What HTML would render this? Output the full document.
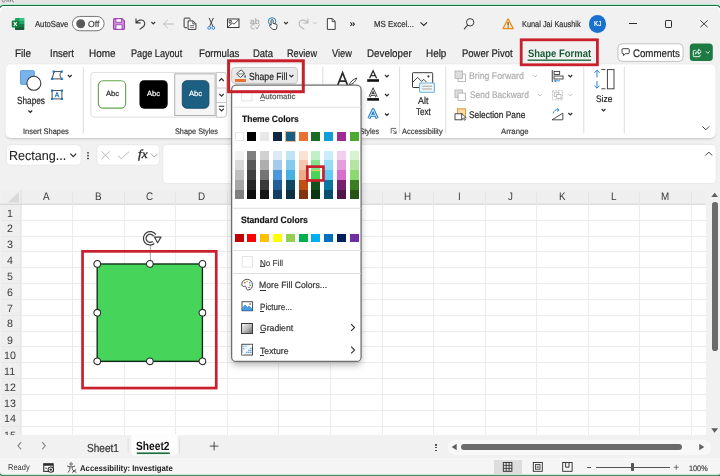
<!DOCTYPE html><html><head><meta charset="utf-8"><title>Excel</title><style>

html,body{margin:0;padding:0}
body{width:720px;height:476px;overflow:hidden;position:relative;background:#e6e6e6;font-family:"Liberation Sans",sans-serif}
#w{position:absolute;left:0;top:0;width:720px;height:476px;overflow:hidden;will-change:transform}
.a{position:absolute}
.t{position:absolute;white-space:nowrap;line-height:1;transform-origin:0 0;-webkit-text-stroke:0.2px currentColor;transform:rotate(0.05deg)}
svg{overflow:visible}

</style></head><body><div id="w">
<div class="a" style="left:0px;top:0px;width:720px;height:5px;background:#e6e6e6;"></div>
<svg class="a" style="left:0px;top:0px;" width="18" height="3"><path d="M2.2 0 V0.6 a1.4 1.4 0 0 0 2.8 0 V0 M7 0 V1.8 M8.8 0 V1.8 M10.6 0 V1.8 M12.4 0 V0.8 a1 1 0 0 0 1.6 0.8" fill="none" stroke="#777" stroke-width="0.9"/></svg>
<svg class="a" style="left:0px;top:0px;" width="720" height="476"><path d="M-1.2 12 V10.5 a5 5 0 0 1 5 -5 H716.2 a5 5 0 0 1 5 5 V12" fill="none" stroke="#b5edd0" stroke-width="2.8"/> <path d="M-1.2 480 V10.5 a5 5 0 0 1 5 -5 H716.2 a5 5 0 0 1 5 5 V480 Z" fill="#f1f1f1" stroke="#1e6e42" stroke-width="1.2"/> <path d="M0 12 V11 a4.2 4.2 0 0 1 4.2 -4.2 H715.8 a4.2 4.2 0 0 1 4.2 4.2 V12" fill="none" stroke="#ffffff" stroke-width="1.1"/></svg>
<svg class="a" style="left:11px;top:18px;" width="14" height="12"><g transform="translate(0.75 0)"><rect x="3.2" y="0" width="9.3" height="12" rx="1" fill="#21a366"/> <rect x="7.8" y="0" width="4.7" height="3" fill="#33c481"/> <rect x="3.2" y="3" width="4.6" height="3" fill="#107c41"/> <rect x="7.8" y="3" width="4.7" height="3" fill="#21a366"/> <rect x="3.2" y="6" width="4.6" height="3" fill="#0e6a37"/> <rect x="7.8" y="6" width="4.7" height="3" fill="#107c41"/> <rect x="3.2" y="9" width="9.3" height="3" rx="1" fill="#185c37"/> <rect x="0" y="2.6" width="7" height="7" rx="1" fill="#107c41"/> <path d="M2 4.2 L5 8 M5 4.2 L2 8" stroke="#fff" stroke-width="1.1" fill="none"/></g></svg>
<span class="t" style="left:34.65px;top:19.76px;font-size:8.76px;color:#333;transform:scaleX(0.8782) rotate(0.05deg);">AutoSave</span>
<svg class="a" style="left:72px;top:16px;" width="33" height="16"><rect x="0.450" y="0.450" width="31.700" height="14.300" rx="7.2" fill="#fff" stroke="#6a6a6a" stroke-width="0.9"/></svg>
<svg class="a" style="left:76px;top:19px;" width="10" height="10"><circle cx="4.7" cy="4.7" r="4.5" fill="#5c5c5c"/></svg>
<span class="t" style="left:88.33px;top:19.76px;font-size:8.76px;color:#444;transform:scaleX(0.9822) rotate(0.05deg);">Off</span>
<svg class="a" style="left:113px;top:18px;" width="12" height="12"><path d="M0.6 1.6 a1 1 0 0 1 1-1 H9 L11.4 3 V10.4 a1 1 0 0 1 -1 1 H1.6 a1 1 0 0 1 -1 -1 Z" fill="#d58de0" stroke="#9a3fae" stroke-width="1.1"/> <rect x="3" y="0.8" width="5.6" height="3.4" fill="#fff" stroke="#9a3fae" stroke-width="0.8"/> <rect x="3" y="6.8" width="6" height="4.4" fill="#fff" stroke="#9a3fae" stroke-width="0.8"/></svg>
<svg class="a" style="left:135px;top:17px;" width="11" height="13"><g transform="translate(0 0.5)"><path d="M1 1.2 V5.4 H5.2 M1.2 5.2 C3 2.6 6.4 1.6 8.6 3.4 C10.6 5.2 10 8 7.6 9.8 L5 11.6" fill="none" stroke="#3b3b3b" stroke-width="1.1" stroke-linecap="round" stroke-linejoin="round"/></g></svg>
<svg class="a" style="left:151px;top:21px;" width="5" height="4"><g transform="translate(0 0.5)"><path d="M0.4 0.5 L2.25 2.5 L4.1 0.5" fill="none" stroke="#3b3b3b" stroke-width="1.15"/></g></svg>
<svg class="a" style="left:163px;top:19px;" width="11" height="10"><g transform="translate(0 0.5)"><path d="M0.6 4.5 H10.6 M4.6 0.6 L0.6 4.5 L4.6 8.4" fill="none" stroke="#bdbdbd" stroke-width="1" stroke-linecap="round" stroke-linejoin="round"/></g></svg>
<svg class="a" style="left:183px;top:17px;" width="14" height="13"><g transform="translate(0.5 0.5)"><path d="M0.6 1.4 a0.8 0.8 0 0 1 .8 -.8 H5.8 a0.8 0.8 0 0 1 .8 .8 V2.4 M0.6 1.4 V9.4 a0.8 0.8 0 0 0 .8 .8 H3.6" fill="none" stroke="#3b3b3b" stroke-width="1"/> <path d="M4.6 3.4 H9.6 L12.4 6.2 V11.9 H4.6 Z" fill="#fff" stroke="#3b3b3b" stroke-width="1" stroke-linejoin="round"/> <path d="M9.4 3.6 V6.4 H12.2" fill="none" stroke="#3b3b3b" stroke-width="0.9"/> <path d="M6.4 8 H10.6 M6.4 9.8 H10.6" stroke="#3b3b3b" stroke-width="0.7"/></g></svg>
<svg class="a" style="left:207px;top:17px;" width="8" height="13"><g transform="translate(0.5 0.5)"><path d="M1.6 0.4 L5.4 9 M5.9 0.4 L2.1 9" stroke="#3b3b3b" stroke-width="0.95" fill="none"/> <circle cx="1.7" cy="10.4" r="1.4" fill="#fff" stroke="#1e7bd0" stroke-width="0.95"/> <circle cx="5.8" cy="10.4" r="1.4" fill="#fff" stroke="#1e7bd0" stroke-width="0.95"/></g></svg>
<svg class="a" style="left:227px;top:18px;" width="13" height="10"><g transform="translate(0 0.5)"><rect x="0.5" y="0.5" width="11.5" height="8.5" fill="#fff" stroke="#3b3b3b" stroke-width="1"/> <path d="M0.6 8.6 L5.4 4.6 L7 5.6 L12 0.8" fill="none" stroke="#3b3b3b" stroke-width="0.9"/> <path d="M2 2 h2.4 v1.8 h-2.4 z M2 4.6 h2" fill="none" stroke="#3b3b3b" stroke-width="0.8"/></g></svg>
<span class="t" style="left:250.28px;top:17.73px;font-size:7.88px;color:#a9a9a9;transform:scaleX(1.0895) rotate(0.05deg);">ab</span>
<svg class="a" style="left:250px;top:23px;" width="10" height="7"><g transform="translate(0 0.6)"><path d="M4.4 1.2 C2.6 0.6 0.8 1.6 0.8 3.2 C0.8 4.8 2.6 5.8 4.4 5.2 M5.4 3.2 L7 5.4 L9.6 0.8" fill="none" stroke="#a9a9a9" stroke-width="0.95"/></g></svg>
<svg class="a" style="left:267px;top:17px;" width="11" height="13"><g transform="translate(0.5 0)"><circle cx="4.6" cy="4.4" r="3.7" fill="none" stroke="#1e7bd0" stroke-width="1"/> <path d="M3.6 8.2 V3.6 a1 1 0 0 1 2 0 V6.4 L8.6 7.2 a1.2 1.2 0 0 1 1 1.4 L9.2 11 a1.6 1.6 0 0 1 -1.6 1.5 H5.4 L2.2 9.4 a0.9 0.9 0 0 1 1.4 -1.2 Z" fill="#fff" stroke="#3b3b3b" stroke-width="0.95" stroke-linejoin="round"/></g></svg>
<svg class="a" style="left:283px;top:21px;" width="6" height="4"><g transform="translate(0.75 0.5)"><path d="M0.4 0.5 L2.25 2.5 L4.1 0.5" fill="none" stroke="#3b3b3b" stroke-width="1.15"/></g></svg>
<svg class="a" style="left:297px;top:17px;" width="12" height="13"><g transform="translate(0.5 0.5)"><path d="M10.4 1.2 V5.4 H6.2 M10.2 5.2 C8.4 2.6 5 1.6 2.8 3.4 C0.8 5.2 1.4 8 3.8 9.8 L6.4 11.6" fill="none" stroke="#b5b5b5" stroke-width="1.05" stroke-linecap="round" stroke-linejoin="round"/></g></svg>
<svg class="a" style="left:312px;top:21px;" width="5" height="4"><g transform="translate(0.5 0.5)"><path d="M0.4 0.5 L2.25 2.5 L4.1 0.5" fill="none" stroke="#c4c4c4" stroke-width="0.9"/></g></svg>
<svg class="a" style="left:326px;top:18px;" width="10" height="12"><g transform="translate(0.75 0)"><path d="M0.6 0.6 H5.6 L8.4 3.4 V11.4 H0.6 Z" fill="#fff" stroke="#3b3b3b" stroke-width="1" stroke-linejoin="round"/><path d="M5.4 0.8 V3.6 H8.2" fill="none" stroke="#3b3b3b" stroke-width="0.9"/></g></svg>
<svg class="a" style="left:350px;top:22px;" width="5" height="5"><path d="M0.4 0.4 L2 2.2 L0.4 4 M2.8 0.4 L4.4 2.2 L2.8 4" fill="none" stroke="#2b2b2b" stroke-width="1.05"/></svg>
<span class="t" style="left:373.66px;top:19.76px;font-size:8.76px;color:#333;transform:scaleX(0.9011) rotate(0.05deg);">MS Excel...</span>
<svg class="a" style="left:420px;top:21px;" width="8" height="6"><g transform="translate(0 0.8)"><path d="M0.5 0.5 L3.75 3.7 L7 0.5" fill="none" stroke="#2b2b2b" stroke-width="1.15"/></g></svg>
<svg class="a" style="left:463px;top:18px;" width="12" height="12"><g transform="translate(0.75 0)"><circle cx="6.4" cy="4.3" r="3.7" fill="none" stroke="#3b3b3b" stroke-width="1"/><path d="M3.8 7.2 L0.6 10.9" stroke="#3b3b3b" stroke-width="1.1" stroke-linecap="round"/></g></svg>
<svg class="a" style="left:502px;top:18px;" width="12" height="12"><g transform="translate(0.5 0)"><path d="M5.6 0.8 L10.7 10.6 H0.55 Z" fill="#fde9c6" stroke="#e8891a" stroke-width="1.2" stroke-linejoin="round"/><path d="M5.6 4 V7.4" stroke="#5a3a00" stroke-width="1.1"/><circle cx="5.6" cy="9" r="0.65" fill="#5a3a00"/></g></svg>
<span class="t" style="left:521.98px;top:19.76px;font-size:8.76px;color:#333;transform:scaleX(0.8427) rotate(0.05deg);">Kunal Jai Kaushik</span>
<div class="a" style="left:588.75px;top:15px;width:17.5px;height:17.5px;background:#1870cf;border-radius:9px;"></div>
<span class="t" style="left:594.23px;top:21.21px;font-size:7.15px;color:#fff;transform:scaleX(0.8796) rotate(0.05deg);">KJ</span>
<div class="a" style="left:628.75px;top:23.4px;width:8.4px;height:0.9px;background:#2b2b2b;"></div>
<div class="a" style="left:664.5px;top:20px;width:7.6px;height:7.6px;border:1px solid #2b2b2b;box-sizing:border-box;border-radius:1.2px;"></div>
<svg class="a" style="left:700px;top:20px;" width="8" height="8"><path d="M0.3 0.3 L7.7 7.3 M7.7 0.3 L0.3 7.3" stroke="#2b2b2b" stroke-width="0.9"/></svg>
<span class="t" style="left:15.03px;top:47.75px;font-size:10.95px;color:#242424;transform:scaleX(0.9134) rotate(0.05deg);">File</span>
<span class="t" style="left:49.84px;top:47.75px;font-size:10.95px;color:#242424;transform:scaleX(0.8754) rotate(0.05deg);">Insert</span>
<span class="t" style="left:89.14px;top:47.75px;font-size:10.95px;color:#242424;transform:scaleX(0.9111) rotate(0.05deg);">Home</span>
<span class="t" style="left:131.32px;top:47.75px;font-size:10.95px;color:#242424;transform:scaleX(0.834) rotate(0.05deg);">Page Layout</span>
<span class="t" style="left:199.14px;top:47.75px;font-size:10.95px;color:#242424;transform:scaleX(0.8856) rotate(0.05deg);">Formulas</span>
<span class="t" style="left:253.24px;top:47.75px;font-size:10.95px;color:#242424;transform:scaleX(0.8668) rotate(0.05deg);">Data</span>
<span class="t" style="left:287.25px;top:47.75px;font-size:10.95px;color:#242424;transform:scaleX(0.8363) rotate(0.05deg);">Review</span>
<span class="t" style="left:332.27px;top:47.75px;font-size:10.95px;color:#242424;transform:scaleX(0.8455) rotate(0.05deg);">View</span>
<span class="t" style="left:367.17px;top:47.75px;font-size:10.95px;color:#242424;transform:scaleX(0.8963) rotate(0.05deg);">Developer</span>
<span class="t" style="left:426.16px;top:47.75px;font-size:10.95px;color:#242424;transform:scaleX(0.9043) rotate(0.05deg);">Help</span>
<span class="t" style="left:462.27px;top:47.75px;font-size:10.95px;color:#242424;transform:scaleX(0.8659) rotate(0.05deg);">Power Pivot</span>
<span class="t" style="left:527.65px;top:47.86px;font-size:10.8px;color:#185c37;font-weight:bold;transform:scaleX(0.8758) rotate(0.05deg);-webkit-text-stroke:0;">Shape Format</span>
<svg class="a" style="left:527px;top:59px;" width="64" height="2"><g transform="translate(0.6 0.5)"><rect x="0" y="0" width="63.400" height="1.400" rx="0" fill="#1e6e42"/></g></svg>
<svg class="a" style="left:617px;top:43px;" width="67" height="19"><g transform="translate(0.5 0.4)"><rect x="0.450" y="0.450" width="65.100" height="17.500" rx="4" fill="#fff" stroke="#bcbcbc" stroke-width="0.9"/></g></svg>
<svg class="a" style="left:621px;top:48px;" width="9" height="9"><g transform="translate(0.5 0.2)"><path d="M1.4 0.5 H6.8 a0.9 0.9 0 0 1 .9 .9 V4.6 a0.9 0.9 0 0 1 -.9 .9 H4 L2 7.4 V5.5 H1.4 a0.9 0.9 0 0 1 -.9 -.9 V1.4 a0.9 0.9 0 0 1 .9 -.9 Z" fill="none" stroke="#2b2b2b" stroke-width="0.9" stroke-linejoin="round"/></g></svg>
<span class="t" style="left:632.84px;top:47.75px;font-size:10.95px;color:#242424;transform:scaleX(0.8854) rotate(0.05deg);">Comments</span>
<svg class="a" style="left:689px;top:43px;" width="24" height="19"><g transform="translate(0.8 0.6)"><rect x="0" y="0" width="23.000" height="17.500" rx="3.6" fill="#1e7a43"/></g></svg>
<svg class="a" style="left:692px;top:47px;" width="10" height="11"><g transform="translate(0.6 0.8)"><path d="M3 2.6 H1.6 a0.9 0.9 0 0 0 -.9 .9 V8 a0.9 0.9 0 0 0 .9 .9 H6.6 a0.9 0.9 0 0 0 .9 -.9 V7" fill="none" stroke="#fff" stroke-width="0.95"/><path d="M2.8 6.4 C3 4.2 4.4 3.2 6 3.2 V1.4 L8.6 3.9 L6 6.4 V4.6 C4.6 4.6 3.6 5.2 2.8 6.4 Z" fill="none" stroke="#fff" stroke-width="0.9" stroke-linejoin="round"/></g></svg>
<svg class="a" style="left:705px;top:51px;" width="6" height="3"><g transform="translate(0.6 0)"><path d="M0.4 0.4 L2.2 2.3 L4 0.4" fill="none" stroke="#fff" stroke-width="0.9"/></g></svg>
<div class="a" style="left:6px;top:65px;width:709px;height:72.5px;background:#fff;border-radius:5px;box-shadow:0 0.8px 2.4px rgba(0,0,0,0.2);"></div>
<svg class="a" style="left:5px;top:64px;" width="711" height="74"><g transform="translate(0.5 0.2)"><rect x="0" y="0" width="710.200" height="73.600" rx="5" fill="#fff"/></g></svg>
<svg class="a" style="left:82px;top:67px;" width="2" height="67"><g transform="translate(0.8 0)"><rect x="0" y="0" width="1.000" height="66.500" rx="0" fill="#dcdcdc"/></g></svg>
<svg class="a" style="left:322px;top:67px;" width="2" height="67"><g transform="translate(0.3 0)"><rect x="0" y="0" width="1.000" height="66.500" rx="0" fill="#dcdcdc"/></g></svg>
<svg class="a" style="left:399px;top:67px;" width="2" height="67"><g transform="translate(0.1 0)"><rect x="0" y="0" width="1.000" height="66.500" rx="0" fill="#dcdcdc"/></g></svg>
<svg class="a" style="left:445px;top:67px;" width="2" height="67"><g transform="translate(0.3 0)"><rect x="0" y="0" width="1.000" height="66.500" rx="0" fill="#dcdcdc"/></g></svg>
<svg class="a" style="left:583px;top:67px;" width="2" height="67"><g transform="translate(0.3 0)"><rect x="0" y="0" width="1.000" height="66.500" rx="0" fill="#dcdcdc"/></g></svg>
<svg class="a" style="left:623px;top:67px;" width="2" height="67"><g transform="translate(0.8 0)"><rect x="0" y="0" width="1.000" height="66.500" rx="0" fill="#dcdcdc"/></g></svg>
<svg class="a" style="left:20px;top:70px;" width="22" height="22"><g transform="translate(0 0.2)"><rect x="0.5" y="0.5" width="13.8" height="13.6" rx="0.8" fill="#7ab2ea" stroke="#5a9de0" stroke-width="1"/><circle cx="13.85" cy="13.1" r="7" fill="#fff" stroke="#3b3b3b" stroke-width="1.1"/></g></svg>
<span class="t" style="left:17.17px;top:96.37px;font-size:10.22px;color:#242424;transform:scaleX(0.8064) rotate(0.05deg);">Shapes</span>
<svg class="a" style="left:28px;top:110px;" width="5" height="4"><path d="M0.4 0.5 L2.3 2.5 L4.2 0.5" fill="none" stroke="#2b2b2b" stroke-width="1.15"/></svg>
<svg class="a" style="left:51px;top:70px;" width="12" height="10"><g transform="translate(0 0.5)"><path d="M3 1.1 H10.7 C8.4 3.4 8.4 5.8 10.9 8.4 H1.1 Z" fill="none" stroke="#3b3b3b" stroke-width="0.95"/> <rect x="1.6" y="0" width="2.2" height="2.2" fill="#1e7bd0"/><rect x="9.6" y="0" width="2.2" height="2.2" fill="#1e7bd0"/><rect x="0" y="7.3" width="2.2" height="2.2" fill="#1e7bd0"/><rect x="9.8" y="7.3" width="2.2" height="2.2" fill="#1e7bd0"/></g></svg>
<svg class="a" style="left:67px;top:74px;" width="6" height="4"><g transform="translate(0.5 0.5)"><path d="M0.4 0.5 L2.3 2.5 L4.2 0.5" fill="none" stroke="#2b2b2b" stroke-width="1.15"/></g></svg>
<svg class="a" style="left:51px;top:89px;" width="12" height="11"><g transform="translate(0 0.5)"><rect x="1.1" y="1.1" width="9.8" height="8.3" fill="#fff" stroke="#3b3b3b" stroke-width="0.9"/> <path d="M4 7.8 L6 2.8 L8 7.8 M4.8 6.2 H7.2" fill="none" stroke="#1e7bd0" stroke-width="1"/> <rect x="0" y="0" width="2.2" height="2.2" fill="#1e7bd0"/><rect x="9.8" y="0" width="2.2" height="2.2" fill="#1e7bd0"/><rect x="0" y="8.3" width="2.2" height="2.2" fill="#1e7bd0"/><rect x="9.8" y="8.3" width="2.2" height="2.2" fill="#1e7bd0"/></g></svg>
<span class="t" style="left:23.2px;top:128.06px;font-size:8.03px;color:#404040;transform:scaleX(0.9247) rotate(0.05deg);">Insert Shapes</span>
<svg class="a" style="left:90px;top:72px;" width="137" height="46"><g transform="translate(0.4 0)"><rect x="0.450" y="0.450" width="135.500" height="44.700" rx="3" fill="#fff" stroke="#dadada" stroke-width="0.9"/></g></svg>
<svg class="a" style="left:97px;top:80px;" width="30" height="29"><g transform="translate(0.8 0.2)"><rect x="0.550" y="0.550" width="27.300" height="27.400" rx="4.6" fill="#fff" stroke="#62a44c" stroke-width="1.1"/></g></svg>
<span class="t" style="left:105.75px;top:90.0px;font-size:7.59px;color:#222;transform:scaleX(0.9999) rotate(0.05deg);">Abc</span>
<svg class="a" style="left:139px;top:80px;" width="29" height="29"><g transform="translate(0.5 0.2)"><rect x="0" y="0" width="28.200" height="28.500" rx="4.6" fill="#000"/></g></svg>
<span class="t" style="left:146.74px;top:90.0px;font-size:7.59px;color:#fff;transform:scaleX(0.9999) rotate(0.05deg);">Abc</span>
<svg class="a" style="left:174px;top:73px;" width="42" height="43"><g transform="translate(0.3 0.4)"><rect x="0.450" y="0.450" width="40.400" height="41.700" rx="0" fill="#f5f5f5" stroke="#a8a8a8" stroke-width="0.9"/></g></svg>
<svg class="a" style="left:181px;top:80px;" width="29" height="29"><g transform="translate(0.8 0.2)"><rect x="0.450" y="0.450" width="26.700" height="27.600" rx="4.6" fill="#1c5f82" stroke="#164c69" stroke-width="0.9"/></g></svg>
<span class="t" style="left:188.93px;top:90.0px;font-size:7.59px;color:#fff;transform:scaleX(0.9999) rotate(0.05deg);">Abc</span>
<svg class="a" style="left:216px;top:72px;" width="11" height="46"><path d="M0.45 0.45 H7.6 a3 3 0 0 1 3 3 V42.2 a3 3 0 0 1 -3 3 H0.45 Z" fill="#fff" stroke="#c4c4c4" stroke-width="0.9"/><path d="M0.45 16 H10.6 M0.45 30.5 H10.6" stroke="#c4c4c4" stroke-width="0.9"/> <path d="M3.2 9 L5.5 6.6 L7.8 9" fill="none" stroke="#2b2b2b" stroke-width="1.15"/> <path d="M3.2 21.8 L5.5 24.2 L7.8 21.8" fill="none" stroke="#2b2b2b" stroke-width="1.15"/> <path d="M2.8 34.2 H8.2 M3.2 36.6 L5.5 39 L7.8 36.6" fill="none" stroke="#2b2b2b" stroke-width="1.1"/></svg>
<span class="t" style="left:175.19px;top:128.06px;font-size:8.03px;color:#404040;transform:scaleX(0.9105) rotate(0.05deg);">Shape Styles</span>
<svg class="a" style="left:231px;top:67px;" width="67" height="17"><g transform="translate(0.2 0)"><rect x="0.450" y="0.450" width="65.900" height="16.100" rx="3.4" fill="#e9e9e9" stroke="#c4c4c4" stroke-width="0.9"/></g></svg>
<svg class="a" style="left:235px;top:69px;" width="11" height="10"><g transform="translate(0.5 0.3)"><path d="M3.2 2.4 L6 0.6 L9.2 4.4 L5.4 7.8 a0.8 0.8 0 0 1 -1.1 0 L1.6 5 a0.7 0.7 0 0 1 0 -1 Z" fill="#fff" stroke="#3b3b3b" stroke-width="0.9" stroke-linejoin="round"/><path d="M2 4.6 H8.6" stroke="#3b3b3b" stroke-width="0.7"/><path d="M9.6 5.4 c0.6 1 .9 1.6 .9 2.1 a0.9 0.9 0 0 1 -1.8 0 c0 -.5 .3 -1.1 .9 -2.1 Z" fill="#2a5f9e"/></g></svg>
<div class="a" style="left:234.5px;top:79px;width:11px;height:2.6px;background:#e97132;"></div>
<span class="t" style="left:248.82px;top:71.87px;font-size:10.22px;color:#242424;transform:scaleX(0.8442) rotate(0.05deg);">Shape Fill</span>
<svg class="a" style="left:289px;top:74px;" width="5" height="4"><g transform="translate(0 0.4)"><path d="M0.4 0.5 L2.4 2.6 L4.4 0.5" fill="none" stroke="#2b2b2b" stroke-width="1.15"/></g></svg>
<svg class="a" style="left:337px;top:72px;" width="21" height="14"><path d="M0.6 13.4 L5.6 0.8 L10.6 13.4 M2.4 9.2 H8.8" fill="none" stroke="#2b2b2b" stroke-width="1.7"/><path d="M12 13.4 C13.2 9.8 16.2 7.2 19.8 6 C18.8 9.4 16 12 12 13.4 Z" fill="#fff" stroke="#2b2b2b" stroke-width="0.9"/></svg>
<svg class="a" style="left:367px;top:70px;" width="12" height="12"><g transform="translate(0.2 0)"><path d="M2.4 8.2 L5.9 0.7 L9.4 8.2 M3.9 5.6 H7.9" fill="none" stroke="#2b2b2b" stroke-width="1.3"/><rect x="0" y="9.2" width="11.8" height="2.6" fill="#111"/></g></svg>
<svg class="a" style="left:367px;top:88px;" width="12" height="13"><g transform="translate(0.2 0.9)"><path d="M2.4 8.2 L5.9 0.7 L9.4 8.2 M3.9 5.6 H7.9" fill="none" stroke="#2b2b2b" stroke-width="2.3"/><path d="M2.4 8.2 L5.9 0.7 L9.4 8.2 M3.9 5.6 H7.9" fill="none" stroke="#fff" stroke-width="0.8"/><rect x="0" y="9.2" width="11.8" height="2.6" fill="#111"/></g></svg>
<svg class="a" style="left:367px;top:108px;" width="12" height="12"><g transform="translate(0.5 0.7)"><path d="M1.4 9.8 L5.6 0.9 L9.8 9.8 M3.2 6.6 H8" fill="none" stroke="#1e7bd0" stroke-width="3" stroke-linejoin="round"/><path d="M1.4 9.8 L5.6 0.9 L9.8 9.8 M3.2 6.6 H8" fill="none" stroke="#e4f2ff" stroke-width="1"/></g></svg>
<svg class="a" style="left:384px;top:74px;" width="6" height="4"><g transform="translate(0.6 0.5)"><path d="M0.4 0.5 L2.3 2.5 L4.2 0.5" fill="none" stroke="#2b2b2b" stroke-width="1.15"/></g></svg>
<svg class="a" style="left:384px;top:93px;" width="6" height="4"><g transform="translate(0.6 0.5)"><path d="M0.4 0.5 L2.3 2.5 L4.2 0.5" fill="none" stroke="#2b2b2b" stroke-width="1.15"/></g></svg>
<svg class="a" style="left:384px;top:113px;" width="6" height="4"><g transform="translate(0.6 0)"><path d="M0.4 0.5 L2.3 2.5 L4.2 0.5" fill="none" stroke="#2b2b2b" stroke-width="1.15"/></g></svg>
<span class="t" style="left:330.95px;top:128.06px;font-size:8.03px;color:#404040;transform:scaleX(0.9032) rotate(0.05deg);">WordArt Styles</span>
<svg class="a" style="left:390px;top:128px;" width="7" height="6"><g transform="translate(0.75 0)"><path d="M0.4 5.4 V0.4 H5.4" fill="none" stroke="#444" stroke-width="0.8"/><path d="M2 2 L5.2 5.2 M5.4 2.6 V5.4 H2.6" fill="none" stroke="#444" stroke-width="0.8"/></g></svg>
<svg class="a" style="left:412px;top:72px;" width="23" height="21"><g transform="translate(0 0.2)"><rect x="0.5" y="0.5" width="20.2" height="14.8" rx="0.6" fill="#fff" stroke="#3b3b3b" stroke-width="1"/> <path d="M0.8 10 L5.6 5.2 L9.6 9.2 L11.8 7.2 L14.6 10" fill="none" stroke="#3b3b3b" stroke-width="0.95"/><circle cx="16.4" cy="4.2" r="1.1" fill="#3b3b3b"/> <rect x="7.6" y="10.8" width="14.8" height="9.2" rx="0.8" fill="#eef7fc" stroke="#6fb0d6" stroke-width="1.1"/><path d="M10 14 H20 M10 16.8 H20" stroke="#a39a8c" stroke-width="0.9"/></g></svg>
<span class="t" style="left:417.64px;top:95.94px;font-size:9.85px;color:#242424;transform:scaleX(0.9052) rotate(0.05deg);">Alt</span>
<span class="t" style="left:415.55px;top:107.44px;font-size:9.85px;color:#242424;transform:scaleX(0.8169) rotate(0.05deg);">Text</span>
<span class="t" style="left:401.94px;top:128.06px;font-size:8.03px;color:#404040;transform:scaleX(0.9316) rotate(0.05deg);">Accessibility</span>
<svg class="a" style="left:454px;top:70px;" width="12" height="12"><g transform="translate(0.5 0.5)"><rect x="3.6" y="3.6" width="7.4" height="7.4" fill="#fff" stroke="#b4b4b4" stroke-width="0.9"/><rect x="0.5" y="0.5" width="7.4" height="7.4" fill="#dedede" stroke="#b4b4b4" stroke-width="0.9"/></g></svg>
<svg class="a" style="left:454px;top:89px;" width="12" height="12"><g transform="translate(0.5 0.5)"><rect x="0.5" y="0.5" width="7.4" height="7.4" fill="#dedede" stroke="#b4b4b4" stroke-width="0.9"/><rect x="3.6" y="3.6" width="7.4" height="7.4" fill="#fff" stroke="#b4b4b4" stroke-width="0.9"/></g></svg>
<span class="t" style="left:469.35px;top:71.04px;font-size:9.64px;color:#adadad;transform:scaleX(0.9083) rotate(0.05deg);">Bring Forward</span>
<span class="t" style="left:469.72px;top:90.04px;font-size:9.64px;color:#adadad;transform:scaleX(0.873) rotate(0.05deg);">Send Backward</span>
<svg class="a" style="left:533px;top:74px;" width="5" height="4"><g transform="translate(0 0.6)"><path d="M0.4 0.4 L2.2 2.4 L4 0.4" fill="none" stroke="#b9b9b9" stroke-width="0.9"/></g></svg>
<svg class="a" style="left:537px;top:93px;" width="5" height="4"><g transform="translate(0.6 0.6)"><path d="M0.4 0.4 L2.2 2.4 L4 0.4" fill="none" stroke="#b9b9b9" stroke-width="0.9"/></g></svg>
<svg class="a" style="left:454px;top:108px;" width="13" height="13"><g transform="translate(0.5 0.3)"><rect x="3" y="0.5" width="8" height="8" fill="#fbd9a5" stroke="#d8912c" stroke-width="0.9"/><rect x="0.5" y="5.5" width="7" height="6" fill="#fff" stroke="#3b3b3b" stroke-width="0.9"/><path d="M7.2 5.4 V11.4 L8.8 9.9 L9.9 12 L10.9 11.5 L9.9 9.5 H11.8 Z" fill="#fff" stroke="#2b2b2b" stroke-width="0.7" stroke-linejoin="round"/></g></svg>
<span class="t" style="left:468.8px;top:110.24px;font-size:9.64px;color:#242424;transform:scaleX(0.8695) rotate(0.05deg);">Selection Pane</span>
<span class="t" style="left:500.93px;top:128.06px;font-size:8.03px;color:#404040;transform:scaleX(0.9695) rotate(0.05deg);">Arrange</span>
<svg class="a" style="left:551px;top:70px;" width="13" height="12"><g transform="translate(0.25 0)"><path d="M1 0 V12" stroke="#3b3b3b" stroke-width="1"/><rect x="2.8" y="1.4" width="5.6" height="3" fill="#fff" stroke="#3b3b3b" stroke-width="0.9"/><rect x="2.8" y="6" width="9" height="3" fill="#fff" stroke="#3b3b3b" stroke-width="0.9"/><path d="M3.2 10.8 H8.8 M5 9.6 L3.2 10.8 L5 12" fill="none" stroke="#1e7bd0" stroke-width="0.8"/></g></svg>
<svg class="a" style="left:568px;top:74px;" width="5" height="4"><g transform="translate(0 0.5)"><path d="M0.4 0.5 L2.3 2.5 L4.2 0.5" fill="none" stroke="#2b2b2b" stroke-width="1.15"/></g></svg>
<svg class="a" style="left:551px;top:89px;" width="13" height="12"><g transform="translate(0.25 0.5)"><rect x="1.2" y="1.2" width="10" height="9.2" fill="none" stroke="#b0b0b0" stroke-width="0.8" stroke-dasharray="1.6 1.2"/><rect x="3" y="2.8" width="4.6" height="4.2" fill="none" stroke="#b0b0b0" stroke-width="0.8"/><rect x="5.4" y="5" width="4.4" height="4" fill="#fff" stroke="#b0b0b0" stroke-width="0.8"/></g></svg>
<svg class="a" style="left:568px;top:93px;" width="5" height="4"><g transform="translate(0 0.5)"><path d="M0.4 0.5 L2.3 2.5 L4.2 0.5" fill="none" stroke="#c0c0c0" stroke-width="0.9"/></g></svg>
<svg class="a" style="left:551px;top:108px;" width="13" height="13"><g transform="translate(0.25 0)"><path d="M0.8 11.8 H11.6 V5.2 Z" fill="#fff" stroke="#3b3b3b" stroke-width="0.9" stroke-linejoin="round"/><path d="M2 5.4 C2.4 2.6 4.8 1.2 7.4 1.8 M6 0.2 L7.8 1.9 L5.8 3.4" fill="none" stroke="#1e7bd0" stroke-width="0.9"/></g></svg>
<svg class="a" style="left:568px;top:112px;" width="5" height="4"><g transform="translate(0 0.5)"><path d="M0.4 0.5 L2.3 2.5 L4.2 0.5" fill="none" stroke="#2b2b2b" stroke-width="1.15"/></g></svg>
<svg class="a" style="left:593px;top:69px;" width="22" height="21"><path d="M4 1.2 V8.4 M1.4 3.8 L4 1.2 L6.6 3.8" fill="none" stroke="#1e7bd0" stroke-width="0.95"/><path d="M4 12 V19.2 M1.4 16.6 L4 19.2 L6.6 16.6" fill="none" stroke="#1e7bd0" stroke-width="0.95"/> <path d="M8.4 0.6 H12.4 M8.4 19.8 H12.4" stroke="#3b3b3b" stroke-width="0.95"/><rect x="14.4" y="0.6" width="6.6" height="19.2" fill="#fff" stroke="#3b3b3b" stroke-width="0.95"/></svg>
<span class="t" style="left:595.64px;top:94.47px;font-size:9.49px;color:#242424;transform:scaleX(0.8842) rotate(0.05deg);">Size</span>
<svg class="a" style="left:601px;top:108px;" width="5" height="4"><g transform="translate(0.25 0.5)"><path d="M0.4 0.5 L2.3 2.5 L4.2 0.5" fill="none" stroke="#2b2b2b" stroke-width="1.15"/></g></svg>
<svg class="a" style="left:702px;top:126px;" width="8" height="5"><path d="M0.4 0.4 L3.8 3.8 L7.2 0.4" fill="none" stroke="#2b2b2b" stroke-width="0.9"/></svg>
<svg class="a" style="left:6px;top:144px;" width="76" height="22"><g transform="translate(0.0 0.3)"><rect x="0.400" y="0.400" width="74.800" height="20.500" rx="3.9" fill="#fff" stroke="#e4e4e4" stroke-width="0.8"/></g></svg>
<span class="t" style="left:8.89px;top:148.68px;font-size:13.14px;color:#1f1f1f;transform:scaleX(0.9566) rotate(0.05deg);-webkit-text-stroke:0.08px currentColor;">Rectang...</span>
<svg class="a" style="left:70px;top:153px;" width="7" height="5"><g transform="translate(0 0.2)"><path d="M0.4 0.4 L3.3 3.4 L6.2 0.4" fill="none" stroke="#2b2b2b" stroke-width="1.15"/></g></svg>
<svg class="a" style="left:87px;top:151px;" width="2" height="9"><g transform="translate(0 0.8)"><circle cx="1" cy="1" r="0.9" fill="#3a3a3a"/><circle cx="1" cy="3.8" r="0.9" fill="#3a3a3a"/><circle cx="1" cy="6.6" r="0.9" fill="#3a3a3a"/></g></svg>
<svg class="a" style="left:96px;top:144px;" width="64" height="22"><g transform="translate(0.4 0.3)"><rect x="0.400" y="0.400" width="62.600" height="20.500" rx="3.9" fill="#fff" stroke="#e4e4e4" stroke-width="0.8"/></g></svg>
<svg class="a" style="left:101px;top:151px;" width="9" height="9"><path d="M0.4 0.4 L8.6 8.2 M8.6 0.4 L0.4 8.2" stroke="#a8a8a8" stroke-width="0.8"/></svg>
<svg class="a" style="left:117px;top:151px;" width="13" height="9"><g transform="translate(0.5 0.2)"><path d="M0.5 4.6 L3.8 7.6 L11.5 0.5" fill="none" stroke="#a8a8a8" stroke-width="0.8"/></g></svg>
<span class="t" style="left:137.62px;top:147.92px;font-size:12.26px;color:#2b2b2b;font-style:italic;font-family:&quot;Liberation Serif&quot;,serif;transform:scaleX(1.0764) rotate(0.05deg);-webkit-text-stroke:0.35px currentColor;">fx</span>
<svg class="a" style="left:150px;top:153px;" width="9" height="5"><g transform="translate(0.5 0.2)"><path d="M0.4 0.4 L3.8 3.8 L7.2 0.4" fill="none" stroke="#8a8a8a" stroke-width="0.8"/></g></svg>
<svg class="a" style="left:162px;top:144px;" width="555" height="40"><g transform="translate(0.4 0.0)"><rect x="0.400" y="0.400" width="553.400" height="39.200" rx="4.4" fill="#fff" stroke="#e4e4e4" stroke-width="0.8"/></g></svg>
<svg class="a" style="left:705px;top:151px;" width="8" height="5"><g transform="translate(0 0.5)"><path d="M0.4 4 L3.8 0.6 L7.2 4" fill="none" stroke="#2b2b2b" stroke-width="0.9"/></g></svg>
<div class="a" style="left:0.8px;top:190.3px;width:705.5px;height:244.7px;background:#fff;"></div>
<div class="a" style="left:0.8px;top:190.3px;width:705.5px;height:13.7px;background:#efefef;"></div>
<div class="a" style="left:0.8px;top:190.3px;width:20.2px;height:244.7px;background:#efefef;"></div>
<svg class="a" style="left:0px;top:203px;" width="707" height="2"><g transform="translate(0 0.8)"><rect x="0" y="0" width="706.300" height="0.900" rx="0" fill="#cdcdcd"/></g></svg>
<svg class="a" style="left:20px;top:190px;" width="2" height="245"><g transform="translate(0.6 0.3)"><rect x="0" y="0" width="0.900" height="244.700" rx="0" fill="#dcdcdc"/></g></svg>
<svg class="a" style="left:7px;top:192px;" width="12" height="11"><g transform="translate(0.5 0)"><path d="M11.5 0 V10.5 H0 Z" fill="#d9d9d9"/></g></svg>
<div class="a" style="left:72.16px;top:204px;width:0.9px;height:231.0px;background:#ececec"></div><div class="a" style="left:72.16px;top:192.5px;width:0.9px;height:11px;background:#e5e5e5"></div><div class="a" style="left:123.72px;top:204px;width:0.9px;height:231.0px;background:#ececec"></div><div class="a" style="left:123.72px;top:192.5px;width:0.9px;height:11px;background:#e5e5e5"></div><div class="a" style="left:175.28px;top:204px;width:0.9px;height:231.0px;background:#ececec"></div><div class="a" style="left:175.28px;top:192.5px;width:0.9px;height:11px;background:#e5e5e5"></div><div class="a" style="left:226.84px;top:204px;width:0.9px;height:231.0px;background:#ececec"></div><div class="a" style="left:226.84px;top:192.5px;width:0.9px;height:11px;background:#e5e5e5"></div><div class="a" style="left:278.40px;top:204px;width:0.9px;height:231.0px;background:#ececec"></div><div class="a" style="left:278.40px;top:192.5px;width:0.9px;height:11px;background:#e5e5e5"></div><div class="a" style="left:329.96px;top:204px;width:0.9px;height:231.0px;background:#ececec"></div><div class="a" style="left:329.96px;top:192.5px;width:0.9px;height:11px;background:#e5e5e5"></div><div class="a" style="left:381.52px;top:204px;width:0.9px;height:231.0px;background:#ececec"></div><div class="a" style="left:381.52px;top:192.5px;width:0.9px;height:11px;background:#e5e5e5"></div><div class="a" style="left:433.08px;top:204px;width:0.9px;height:231.0px;background:#ececec"></div><div class="a" style="left:433.08px;top:192.5px;width:0.9px;height:11px;background:#e5e5e5"></div><div class="a" style="left:484.64px;top:204px;width:0.9px;height:231.0px;background:#ececec"></div><div class="a" style="left:484.64px;top:192.5px;width:0.9px;height:11px;background:#e5e5e5"></div><div class="a" style="left:536.20px;top:204px;width:0.9px;height:231.0px;background:#ececec"></div><div class="a" style="left:536.20px;top:192.5px;width:0.9px;height:11px;background:#e5e5e5"></div><div class="a" style="left:587.76px;top:204px;width:0.9px;height:231.0px;background:#ececec"></div><div class="a" style="left:587.76px;top:192.5px;width:0.9px;height:11px;background:#e5e5e5"></div><div class="a" style="left:639.32px;top:204px;width:0.9px;height:231.0px;background:#ececec"></div><div class="a" style="left:639.32px;top:192.5px;width:0.9px;height:11px;background:#e5e5e5"></div><div class="a" style="left:690.88px;top:204px;width:0.9px;height:231.0px;background:#ececec"></div><div class="a" style="left:690.88px;top:192.5px;width:0.9px;height:11px;background:#e5e5e5"></div><div class="a" style="left:21.0px;top:219.83px;width:685.3px;height:0.9px;background:#ececec"></div><div class="a" style="left:2px;top:219.83px;width:19.0px;height:0.9px;background:#e6e6e6"></div><div class="a" style="left:21.0px;top:235.66px;width:685.3px;height:0.9px;background:#ececec"></div><div class="a" style="left:2px;top:235.66px;width:19.0px;height:0.9px;background:#e6e6e6"></div><div class="a" style="left:21.0px;top:251.49px;width:685.3px;height:0.9px;background:#ececec"></div><div class="a" style="left:2px;top:251.49px;width:19.0px;height:0.9px;background:#e6e6e6"></div><div class="a" style="left:21.0px;top:267.32px;width:685.3px;height:0.9px;background:#ececec"></div><div class="a" style="left:2px;top:267.32px;width:19.0px;height:0.9px;background:#e6e6e6"></div><div class="a" style="left:21.0px;top:283.15px;width:685.3px;height:0.9px;background:#ececec"></div><div class="a" style="left:2px;top:283.15px;width:19.0px;height:0.9px;background:#e6e6e6"></div><div class="a" style="left:21.0px;top:298.98px;width:685.3px;height:0.9px;background:#ececec"></div><div class="a" style="left:2px;top:298.98px;width:19.0px;height:0.9px;background:#e6e6e6"></div><div class="a" style="left:21.0px;top:314.81px;width:685.3px;height:0.9px;background:#ececec"></div><div class="a" style="left:2px;top:314.81px;width:19.0px;height:0.9px;background:#e6e6e6"></div><div class="a" style="left:21.0px;top:330.64px;width:685.3px;height:0.9px;background:#ececec"></div><div class="a" style="left:2px;top:330.64px;width:19.0px;height:0.9px;background:#e6e6e6"></div><div class="a" style="left:21.0px;top:346.47px;width:685.3px;height:0.9px;background:#ececec"></div><div class="a" style="left:2px;top:346.47px;width:19.0px;height:0.9px;background:#e6e6e6"></div><div class="a" style="left:21.0px;top:362.30px;width:685.3px;height:0.9px;background:#ececec"></div><div class="a" style="left:2px;top:362.30px;width:19.0px;height:0.9px;background:#e6e6e6"></div><div class="a" style="left:21.0px;top:378.13px;width:685.3px;height:0.9px;background:#ececec"></div><div class="a" style="left:2px;top:378.13px;width:19.0px;height:0.9px;background:#e6e6e6"></div><div class="a" style="left:21.0px;top:393.96px;width:685.3px;height:0.9px;background:#ececec"></div><div class="a" style="left:2px;top:393.96px;width:19.0px;height:0.9px;background:#e6e6e6"></div><div class="a" style="left:21.0px;top:409.79px;width:685.3px;height:0.9px;background:#ececec"></div><div class="a" style="left:2px;top:409.79px;width:19.0px;height:0.9px;background:#e6e6e6"></div><div class="a" style="left:21.0px;top:425.62px;width:685.3px;height:0.9px;background:#ececec"></div><div class="a" style="left:2px;top:425.62px;width:19.0px;height:0.9px;background:#e6e6e6"></div>
<span class="t" style="left:43.49px;top:191.25px;font-size:10.95px;color:#3a3a3a;transform:scaleX(0.9) rotate(0.05deg);-webkit-text-stroke:0;">A</span>
<span class="t" style="left:95.05px;top:191.25px;font-size:10.95px;color:#3a3a3a;transform:scaleX(0.9) rotate(0.05deg);-webkit-text-stroke:0;">B</span>
<span class="t" style="left:146.34px;top:191.25px;font-size:10.95px;color:#3a3a3a;transform:scaleX(0.9) rotate(0.05deg);-webkit-text-stroke:0;">C</span>
<span class="t" style="left:197.9px;top:191.25px;font-size:10.95px;color:#3a3a3a;transform:scaleX(0.9) rotate(0.05deg);-webkit-text-stroke:0;">D</span>
<span class="t" style="left:249.73px;top:191.25px;font-size:10.95px;color:#3a3a3a;transform:scaleX(0.9) rotate(0.05deg);-webkit-text-stroke:0;">E</span>
<span class="t" style="left:301.57px;top:191.25px;font-size:10.95px;color:#3a3a3a;transform:scaleX(0.9) rotate(0.05deg);-webkit-text-stroke:0;">F</span>
<span class="t" style="left:352.31px;top:191.25px;font-size:10.95px;color:#3a3a3a;transform:scaleX(0.9) rotate(0.05deg);-webkit-text-stroke:0;">G</span>
<span class="t" style="left:404.14px;top:191.25px;font-size:10.95px;color:#3a3a3a;transform:scaleX(0.9) rotate(0.05deg);-webkit-text-stroke:0;">H</span>
<span class="t" style="left:457.89px;top:191.25px;font-size:10.95px;color:#3a3a3a;transform:scaleX(0.9) rotate(0.05deg);-webkit-text-stroke:0;">I</span>
<span class="t" style="left:508.36px;top:191.25px;font-size:10.95px;color:#3a3a3a;transform:scaleX(0.9) rotate(0.05deg);-webkit-text-stroke:0;">J</span>
<span class="t" style="left:559.09px;top:191.25px;font-size:10.95px;color:#3a3a3a;transform:scaleX(0.9) rotate(0.05deg);-webkit-text-stroke:0;">K</span>
<span class="t" style="left:611.2px;top:191.25px;font-size:10.95px;color:#3a3a3a;transform:scaleX(0.9) rotate(0.05deg);-webkit-text-stroke:0;">L</span>
<span class="t" style="left:661.4px;top:191.25px;font-size:10.95px;color:#3a3a3a;transform:scaleX(0.9) rotate(0.05deg);-webkit-text-stroke:0;">M</span>
<span class="t" style="left:7.44px;top:207.79px;font-size:10.66px;color:#3a3a3a;-webkit-text-stroke:0;">1</span>
<span class="t" style="left:7.44px;top:223.28px;font-size:10.66px;color:#3a3a3a;-webkit-text-stroke:0;">2</span>
<span class="t" style="left:7.44px;top:238.77px;font-size:10.66px;color:#3a3a3a;-webkit-text-stroke:0;">3</span>
<span class="t" style="left:7.44px;top:255.26px;font-size:10.66px;color:#3a3a3a;-webkit-text-stroke:0;">4</span>
<span class="t" style="left:7.44px;top:270.75px;font-size:10.66px;color:#3a3a3a;-webkit-text-stroke:0;">5</span>
<span class="t" style="left:7.44px;top:287.24px;font-size:10.66px;color:#3a3a3a;-webkit-text-stroke:0;">6</span>
<span class="t" style="left:7.44px;top:302.73px;font-size:10.66px;color:#3a3a3a;-webkit-text-stroke:0;">7</span>
<span class="t" style="left:7.44px;top:318.22px;font-size:10.66px;color:#3a3a3a;-webkit-text-stroke:0;">8</span>
<span class="t" style="left:7.44px;top:334.71px;font-size:10.66px;color:#3a3a3a;-webkit-text-stroke:0;">9</span>
<span class="t" style="left:4.47px;top:350.2px;font-size:10.66px;color:#3a3a3a;-webkit-text-stroke:0;">10</span>
<span class="t" style="left:4.47px;top:365.69px;font-size:10.66px;color:#3a3a3a;-webkit-text-stroke:0;">11</span>
<span class="t" style="left:4.47px;top:382.18px;font-size:10.66px;color:#3a3a3a;-webkit-text-stroke:0;">12</span>
<span class="t" style="left:4.47px;top:397.67px;font-size:10.66px;color:#3a3a3a;-webkit-text-stroke:0;">13</span>
<span class="t" style="left:4.47px;top:413.16px;font-size:10.66px;color:#3a3a3a;-webkit-text-stroke:0;">14</span>
<span class="t" style="left:4.47px;top:429.65px;font-size:10.66px;color:#3a3a3a;-webkit-text-stroke:0;">15</span>
<div class="a" style="left:0.8px;top:435.0px;width:716.3px;height:23.3px;background:#f1f1f1;"></div>
<div class="a" style="left:706.3px;top:190.3px;width:12.9px;height:244.7px;background:#f1f1f1;"></div>
<svg class="a" style="left:711px;top:192px;" width="8" height="6"><g transform="translate(0.25 0.75)"><path d="M3.4 0 L6.8 4.3 H0 Z" fill="#5f5f5f"/></g></svg>
<div class="a" style="left:712px;top:202.3px;width:5.6px;height:149px;background:#6b6b6b;border-radius:2.8px;"></div>
<svg class="a" style="left:711px;top:428px;" width="8" height="5"><g transform="translate(0.25 0.25)"><path d="M0 0 H6.8 L3.4 4.5 Z" fill="#5f5f5f"/></g></svg>
<svg class="a" style="left:96px;top:263px;" width="108" height="99"><g transform="translate(0.5 0.3)"><rect x="0.675" y="0.675" width="105.250" height="97.350" rx="0" fill="#47d45a" stroke="#0e2a14" stroke-width="1.35"/></g></svg>
<svg class="a" style="left:149px;top:245px;" width="2" height="16"><g transform="translate(0.9 0.6)"><rect x="0" y="0" width="0.800" height="15.000" rx="0" fill="#8f8f8f"/></g></svg>
<svg class="a" style="left:142px;top:230px;" width="20" height="17"><g transform="translate(0 0.4)"><path d="M12.7 5.0 A5.4 5.4 0 1 0 11.5 12.1" fill="none" stroke="#3d3d3d" stroke-width="3.9"/><path d="M12.7 5.0 A5.4 5.4 0 1 0 11.5 12.1" fill="none" stroke="#fff" stroke-width="1.4"/> <path d="M12.4 6.7 H19 L15.6 12.4 Z" fill="#fff" stroke="#3d3d3d" stroke-width="1.1" stroke-linejoin="round"/></g></svg>
<svg class="a" style="left:93px;top:259px;" width="9" height="9"><g transform="translate(0.2 0.9)"><circle cx="4" cy="4" r="3.35" fill="#fff" stroke="#2e2e2e" stroke-width="1.05"/></g></svg>
<svg class="a" style="left:93px;top:308px;" width="9" height="9"><g transform="translate(0.2 0.7)"><circle cx="4" cy="4" r="3.35" fill="#fff" stroke="#2e2e2e" stroke-width="1.05"/></g></svg>
<svg class="a" style="left:93px;top:357px;" width="9" height="9"><g transform="translate(0.2 0.3)"><circle cx="4" cy="4" r="3.35" fill="#fff" stroke="#2e2e2e" stroke-width="1.05"/></g></svg>
<svg class="a" style="left:145px;top:259px;" width="9" height="9"><g transform="translate(0.8 0.9)"><circle cx="4" cy="4" r="3.35" fill="#fff" stroke="#2e2e2e" stroke-width="1.05"/></g></svg>
<svg class="a" style="left:145px;top:357px;" width="9" height="9"><g transform="translate(0.8 0.3)"><circle cx="4" cy="4" r="3.35" fill="#fff" stroke="#2e2e2e" stroke-width="1.05"/></g></svg>
<svg class="a" style="left:198px;top:259px;" width="9" height="9"><g transform="translate(0.4 0.9)"><circle cx="4" cy="4" r="3.35" fill="#fff" stroke="#2e2e2e" stroke-width="1.05"/></g></svg>
<svg class="a" style="left:198px;top:308px;" width="9" height="9"><g transform="translate(0.4 0.7)"><circle cx="4" cy="4" r="3.35" fill="#fff" stroke="#2e2e2e" stroke-width="1.05"/></g></svg>
<svg class="a" style="left:198px;top:357px;" width="9" height="9"><g transform="translate(0.4 0.3)"><circle cx="4" cy="4" r="3.35" fill="#fff" stroke="#2e2e2e" stroke-width="1.05"/></g></svg>
<svg class="a" style="left:17px;top:441px;" width="5" height="9"><g transform="translate(0.5 0.8)"><path d="M3.6 0.4 L0.5 4 L3.6 7.6" fill="none" stroke="#858585" stroke-width="1.1"/></g></svg>
<svg class="a" style="left:41px;top:441px;" width="5" height="9"><g transform="translate(0.8 0.8)"><path d="M0.4 0.4 L3.5 4 L0.4 7.6" fill="none" stroke="#858585" stroke-width="1.1"/></g></svg>
<span class="t" style="left:87.3px;top:443.04px;font-size:11.53px;color:#333;transform:scaleX(0.8764) rotate(0.05deg);">Sheet1</span>
<svg class="a" style="left:127px;top:434px;" width="54" height="23"><path d="M4.3 0 H50.5 V17.4 a4 4 0 0 1 -4 4 H8.3 a4 4 0 0 1 -4 -4 Z" fill="#fdfdfd"/><path d="M1.2 4 V19 M52.6 4 V19" stroke="#dadada" stroke-width="0.8"/></svg>
<span class="t" style="left:136.23px;top:440.67px;font-size:11.97px;color:#111;font-weight:bold;transform:scaleX(0.8534) rotate(0.05deg);-webkit-text-stroke:0;">Sheet2</span>
<svg class="a" style="left:136px;top:452px;" width="34" height="3"><g transform="translate(0.8 0.4)"><rect x="0" y="0" width="33.000" height="1.700" rx="0" fill="#1e6e42"/></g></svg>
<svg class="a" style="left:209px;top:441px;" width="10" height="10"><g transform="translate(0.8 0.8)"><path d="M4.3 0 V8.6 M0 4.3 H8.6" stroke="#3b3b3b" stroke-width="0.9"/></g></svg>
<div class="a" style="left:435.3px;top:444.4px;width:1.3px;height:1.3px;background:#3b3b3b;border-radius:0.65px;"></div>
<div class="a" style="left:435.3px;top:447px;width:1.3px;height:1.3px;background:#3b3b3b;border-radius:0.65px;"></div>
<div class="a" style="left:435.3px;top:449.6px;width:1.3px;height:1.3px;background:#3b3b3b;border-radius:0.65px;"></div>
<div class="a" style="left:447.5px;top:439.5px;width:263px;height:15px;background:#f8f8f8;border-radius:7px;"></div>
<svg class="a" style="left:451px;top:443px;" width="6" height="8"><g transform="translate(0.7 0.8)"><path d="M5 0 V6.4 L0 3.2 Z" fill="#5f5f5f"/></g></svg>
<div class="a" style="left:461px;top:443.7px;width:221px;height:6.6px;background:#6b6b6b;border-radius:3.3px;"></div>
<svg class="a" style="left:699px;top:443px;" width="6" height="8"><g transform="translate(0.25 0.8)"><path d="M0 0 L5 3.2 L0 6.4 Z" fill="#5f5f5f"/></g></svg>
<svg class="a" style="left:0px;top:458px;" width="720" height="18"><g transform="translate(0 0.7)"><rect x="0" y="0" width="720.000" height="17.300" rx="0" fill="#f5f5f5"/></g></svg>
<svg class="a" style="left:0px;top:458px;" width="720" height="2"><g transform="translate(0 0.7)"><rect x="0" y="0" width="720.000" height="1.000" rx="0" fill="#fafafa"/></g></svg>
<span class="t" style="left:7.8px;top:463.47px;font-size:8.32px;color:#333;transform:scaleX(0.9007) rotate(0.05deg);-webkit-text-stroke:0;">Ready</span>
<svg class="a" style="left:43px;top:463px;" width="12" height="10"><g transform="translate(0.2 0.2)"><rect x="0.55" y="0.55" width="9.4" height="7.6" fill="#fff" stroke="#2b2b2b" stroke-width="1.1"/><rect x="0.55" y="0.55" width="9.4" height="2" fill="#2b2b2b"/><path d="M2 5 H3.8" stroke="#2b2b2b" stroke-width="0.9"/><circle cx="7.6" cy="6.4" r="2.7" fill="#fff" stroke="#2b2b2b" stroke-width="1.05"/><circle cx="7.6" cy="6.4" r="1.2" fill="#2b2b2b"/></g></svg>
<svg class="a" style="left:66px;top:462px;" width="12" height="11"><g transform="translate(0.5 0.4)"><circle cx="4.6" cy="1.6" r="1.2" fill="none" stroke="#3b3b3b" stroke-width="0.8"/><path d="M0.6 3.6 L3.6 4.4 H5.6 L8.6 3.6 M3.4 4.6 V7 L1.6 10.2 M5.8 4.6 V6.4" fill="none" stroke="#3b3b3b" stroke-width="0.85"/><path d="M5.6 7 L9.8 10.2 M9.8 7 L5.6 10.2" stroke="#3b3b3b" stroke-width="0.9"/></g></svg>
<span class="t" style="left:80.1px;top:464.32px;font-size:8.32px;color:#222;font-weight:bold;transform:scaleX(0.9338) rotate(0.05deg);-webkit-text-stroke:0;">Accessibility: Investigate</span>
<div class="a" style="left:493.6px;top:459.6px;width:28.6px;height:14.6px;background:#dddddd;"></div>
<svg class="a" style="left:502px;top:462px;" width="11" height="10"><g transform="translate(0.8 0)"><rect x="0.5" y="0.5" width="8.6" height="8.8" fill="none" stroke="#2b2b2b" stroke-width="0.9"/><path d="M3.4 0.5 V9.3 M6.3 0.5 V9.3 M0.5 3.4 H9.1 M0.5 6.4 H9.1" stroke="#2b2b2b" stroke-width="0.8"/></g></svg>
<svg class="a" style="left:532px;top:462px;" width="11" height="10"><g transform="translate(0.8 0)"><rect x="0.5" y="0.5" width="9" height="8.8" fill="none" stroke="#2b2b2b" stroke-width="0.9"/><rect x="2.8" y="2.6" width="4.4" height="4.6" fill="none" stroke="#2b2b2b" stroke-width="0.8"/><path d="M3.8 4.2 H6.2 M3.8 5.6 H6.2" stroke="#2b2b2b" stroke-width="0.6"/></g></svg>
<svg class="a" style="left:562px;top:462px;" width="11" height="10"><g transform="translate(0.2 0)"><rect x="0.5" y="0.5" width="9.4" height="8.8" fill="none" stroke="#2b2b2b" stroke-width="0.9"/><path d="M3.4 0.5 V5.2 M6.8 0.5 V5.2 M3.4 5.2 H6.8" fill="none" stroke="#2b2b2b" stroke-width="0.9"/></g></svg>
<div class="a" style="left:587px;top:466.9px;width:4.4px;height:0.8px;background:#555;"></div>
<div class="a" style="left:596.25px;top:466.9px;width:73.3px;height:0.8px;background:#555;"></div>
<div class="a" style="left:630.8px;top:462.6px;width:3.6px;height:8.9px;background:#555;border-radius:0.8px;"></div>
<svg class="a" style="left:673px;top:464px;" width="6" height="6"><g transform="translate(0.75 0.8)"><path d="M2.5 0 V5 M0 2.5 H5" stroke="#555" stroke-width="0.8"/></g></svg>
<span class="t" style="left:688.5px;top:464.56px;font-size:8.03px;color:#444;transform:scaleX(0.9094) rotate(0.05deg);">100%</span>
<div class="a" style="left:231.5px;top:85.1px;width:129.7px;height:276.5px;background:#fff;border-radius:4.5px;box-shadow:0 3px 7px rgba(0,0,0,0.3);"></div>
<svg class="a" style="left:231px;top:84px;" width="131" height="279"><g transform="translate(0 0.6)"><rect x="0.625" y="0.625" width="129.450" height="276.250" rx="4.5" fill="#fff" stroke="#6e6e6e" stroke-width="1.25"/></g></svg>
<svg class="a" style="left:241px;top:90px;" width="12" height="12"><g transform="translate(0.3 0)"><rect x="0.400" y="0.400" width="10.300" height="10.500" rx="0" fill="#fff" stroke="#dddddd" stroke-width="0.8"/></g></svg>
<span class="t" style="left:259.83px;top:93.48px;font-size:7.74px;color:#555;transform:scaleX(1.0345) rotate(0.05deg);">Automatic</span>
<svg class="a" style="left:260px;top:100px;" width="5" height="1"><g transform="translate(0.2 0.3)"><rect x="0" y="0" width="4.600" height="0.700" rx="0" fill="#555"/></g></svg>
<svg class="a" style="left:232px;top:106px;" width="129" height="2"><g transform="translate(0 0.7)"><rect x="0" y="0" width="128.900" height="0.900" rx="0" fill="#dcdcdc"/></g></svg>
<span class="t" style="left:242.18px;top:114.95px;font-size:9.05px;color:#1a1a1a;font-weight:bold;transform:scaleX(0.9407) rotate(0.05deg);">Theme Colors</span>
<div class="a" style="left:234.5px;top:132px;width:9.0px;height:8.8px;background:#ffffff;border:1px solid #e6e6e6;box-sizing:border-box;"></div>
<div class="a" style="left:247.33px;top:132px;width:9.0px;height:8.8px;background:#000000;"></div>
<div class="a" style="left:260.16px;top:132px;width:9.0px;height:8.8px;background:#e8e8e8;"></div>
<div class="a" style="left:272.99px;top:132px;width:9.0px;height:8.8px;background:#0e2841;"></div>
<div class="a" style="left:285.02px;top:131.2px;width:10.6px;height:10.4px;background:#156082;border:1.2px solid #f0b892;box-sizing:border-box;"></div>
<div class="a" style="left:298.65px;top:132px;width:9.0px;height:8.8px;background:#e97132;"></div>
<div class="a" style="left:311.48px;top:132px;width:9.0px;height:8.8px;background:#196b24;"></div>
<div class="a" style="left:324.31px;top:132px;width:9.0px;height:8.8px;background:#0f9ed5;"></div>
<div class="a" style="left:337.14px;top:132px;width:9.0px;height:8.8px;background:#a02b93;"></div>
<div class="a" style="left:349.97px;top:132px;width:9.0px;height:8.8px;background:#4ea72e;"></div>
<div class="a" style="left:234.5px;top:150.7px;width:9.0px;height:9.8px;background:#f2f2f2;"></div>
<div class="a" style="left:234.5px;top:160.42px;width:9.0px;height:9.8px;background:#d9d9d9;"></div>
<div class="a" style="left:234.5px;top:170.14px;width:9.0px;height:9.8px;background:#bfbfbf;"></div>
<div class="a" style="left:234.5px;top:179.85999999999999px;width:9.0px;height:9.8px;background:#a6a6a6;"></div>
<div class="a" style="left:234.5px;top:189.57999999999998px;width:9.0px;height:9.8px;background:#7f7f7f;"></div>
<div class="a" style="left:247.33px;top:150.7px;width:9.0px;height:9.8px;background:#7f7f7f;"></div>
<div class="a" style="left:247.33px;top:160.42px;width:9.0px;height:9.8px;background:#595959;"></div>
<div class="a" style="left:247.33px;top:170.14px;width:9.0px;height:9.8px;background:#404040;"></div>
<div class="a" style="left:247.33px;top:179.85999999999999px;width:9.0px;height:9.8px;background:#262626;"></div>
<div class="a" style="left:247.33px;top:189.57999999999998px;width:9.0px;height:9.8px;background:#0d0d0d;"></div>
<div class="a" style="left:260.16px;top:150.7px;width:9.0px;height:9.8px;background:#d1d1d1;"></div>
<div class="a" style="left:260.16px;top:160.42px;width:9.0px;height:9.8px;background:#aeaeae;"></div>
<div class="a" style="left:260.16px;top:170.14px;width:9.0px;height:9.8px;background:#747474;"></div>
<div class="a" style="left:260.16px;top:179.85999999999999px;width:9.0px;height:9.8px;background:#3a3a3a;"></div>
<div class="a" style="left:260.16px;top:189.57999999999998px;width:9.0px;height:9.8px;background:#171717;"></div>
<div class="a" style="left:272.99px;top:150.7px;width:9.0px;height:9.8px;background:#dceaf7;"></div>
<div class="a" style="left:272.99px;top:160.42px;width:9.0px;height:9.8px;background:#a6caec;"></div>
<div class="a" style="left:272.99px;top:170.14px;width:9.0px;height:9.8px;background:#4e95d9;"></div>
<div class="a" style="left:272.99px;top:179.85999999999999px;width:9.0px;height:9.8px;background:#215f9a;"></div>
<div class="a" style="left:272.99px;top:189.57999999999998px;width:9.0px;height:9.8px;background:#153e64;"></div>
<div class="a" style="left:285.82px;top:150.7px;width:9.0px;height:9.8px;background:#c1e4f5;"></div>
<div class="a" style="left:285.82px;top:160.42px;width:9.0px;height:9.8px;background:#83caeb;"></div>
<div class="a" style="left:285.82px;top:170.14px;width:9.0px;height:9.8px;background:#46b1e1;"></div>
<div class="a" style="left:285.82px;top:179.85999999999999px;width:9.0px;height:9.8px;background:#104862;"></div>
<div class="a" style="left:285.82px;top:189.57999999999998px;width:9.0px;height:9.8px;background:#0b3041;"></div>
<div class="a" style="left:298.65px;top:150.7px;width:9.0px;height:9.8px;background:#fae2d5;"></div>
<div class="a" style="left:298.65px;top:160.42px;width:9.0px;height:9.8px;background:#f6c5ac;"></div>
<div class="a" style="left:298.65px;top:170.14px;width:9.0px;height:9.8px;background:#f2aa84;"></div>
<div class="a" style="left:298.65px;top:179.85999999999999px;width:9.0px;height:9.8px;background:#c04f15;"></div>
<div class="a" style="left:298.65px;top:189.57999999999998px;width:9.0px;height:9.8px;background:#80350e;"></div>
<div class="a" style="left:311.48px;top:150.7px;width:9.0px;height:9.8px;background:#c1f0c7;"></div>
<div class="a" style="left:311.48px;top:160.42px;width:9.0px;height:9.8px;background:#83e28e;"></div>
<div class="a" style="left:311.48px;top:170.14px;width:9.0px;height:9.8px;background:#47d45a;"></div>
<div class="a" style="left:311.48px;top:179.85999999999999px;width:9.0px;height:9.8px;background:#13501b;"></div>
<div class="a" style="left:311.48px;top:189.57999999999998px;width:9.0px;height:9.8px;background:#0d3512;"></div>
<div class="a" style="left:324.31px;top:150.7px;width:9.0px;height:9.8px;background:#caedfb;"></div>
<div class="a" style="left:324.31px;top:160.42px;width:9.0px;height:9.8px;background:#95dcf7;"></div>
<div class="a" style="left:324.31px;top:170.14px;width:9.0px;height:9.8px;background:#61cbf4;"></div>
<div class="a" style="left:324.31px;top:179.85999999999999px;width:9.0px;height:9.8px;background:#0b769f;"></div>
<div class="a" style="left:324.31px;top:189.57999999999998px;width:9.0px;height:9.8px;background:#074f6a;"></div>
<div class="a" style="left:337.14px;top:150.7px;width:9.0px;height:9.8px;background:#f2cfee;"></div>
<div class="a" style="left:337.14px;top:160.42px;width:9.0px;height:9.8px;background:#e59edc;"></div>
<div class="a" style="left:337.14px;top:170.14px;width:9.0px;height:9.8px;background:#d86dcb;"></div>
<div class="a" style="left:337.14px;top:179.85999999999999px;width:9.0px;height:9.8px;background:#782170;"></div>
<div class="a" style="left:337.14px;top:189.57999999999998px;width:9.0px;height:9.8px;background:#501549;"></div>
<div class="a" style="left:349.97px;top:150.7px;width:9.0px;height:9.8px;background:#d9f2d0;"></div>
<div class="a" style="left:349.97px;top:160.42px;width:9.0px;height:9.8px;background:#b4e5a2;"></div>
<div class="a" style="left:349.97px;top:170.14px;width:9.0px;height:9.8px;background:#8ed973;"></div>
<div class="a" style="left:349.97px;top:179.85999999999999px;width:9.0px;height:9.8px;background:#3b7d23;"></div>
<div class="a" style="left:349.97px;top:189.57999999999998px;width:9.0px;height:9.8px;background:#275317;"></div>
<svg class="a" style="left:232px;top:207px;" width="129" height="2"><g transform="translate(0 0.8)"><rect x="0" y="0" width="128.900" height="0.900" rx="0" fill="#dcdcdc"/></g></svg>
<span class="t" style="left:241.0px;top:216.49px;font-size:9.34px;color:#1a1a1a;font-weight:bold;transform:scaleX(0.9208) rotate(0.05deg);">Standard Colors</span>
<div class="a" style="left:234.5px;top:233.7px;width:9.0px;height:8.2px;background:#c00000;"></div>
<div class="a" style="left:247.33px;top:233.7px;width:9.0px;height:8.2px;background:#ff0000;"></div>
<div class="a" style="left:260.16px;top:233.7px;width:9.0px;height:8.2px;background:#ffc000;"></div>
<div class="a" style="left:272.99px;top:233.7px;width:9.0px;height:8.2px;background:#ffff00;"></div>
<div class="a" style="left:285.82px;top:233.7px;width:9.0px;height:8.2px;background:#92d050;"></div>
<div class="a" style="left:298.65px;top:233.7px;width:9.0px;height:8.2px;background:#00b050;"></div>
<div class="a" style="left:311.48px;top:233.7px;width:9.0px;height:8.2px;background:#00b0f0;"></div>
<div class="a" style="left:324.31px;top:233.7px;width:9.0px;height:8.2px;background:#0070c0;"></div>
<div class="a" style="left:337.14px;top:233.7px;width:9.0px;height:8.2px;background:#002060;"></div>
<div class="a" style="left:349.97px;top:233.7px;width:9.0px;height:8.2px;background:#7030a0;"></div>
<svg class="a" style="left:232px;top:250px;" width="129" height="1"><g transform="translate(0 0.1)"><rect x="0" y="0" width="128.900" height="0.900" rx="0" fill="#dcdcdc"/></g></svg>
<svg class="a" style="left:241px;top:256px;" width="13" height="12"><g transform="translate(0.75 0.2)"><rect x="0.400" y="0.400" width="10.500" height="10.500" rx="0" fill="#fff" stroke="#dddddd" stroke-width="0.8"/></g></svg>
<span class="t" style="left:259.68px;top:258.54px;font-size:8.61px;color:#444;transform:scaleX(0.9443) rotate(0.05deg);">No Fill</span>
<div class="a" style="left:260.2px;top:266.3px;width:4.6px;height:0.6px;background:#444;"></div>
<svg class="a" style="left:232px;top:273px;" width="129" height="1"><g transform="translate(0 0.1)"><rect x="0" y="0" width="128.900" height="0.900" rx="0" fill="#dcdcdc"/></g></svg>
<svg class="a" style="left:241px;top:278px;" width="13" height="13"><g transform="translate(0.25 0.75)"><path d="M6 0.6 C2.6 0.6 0.6 2.8 0.6 5.4 C0.6 7.2 1.8 8 3 7.6 C4.2 7.2 5 7.8 5 9 C5 10.4 5.8 11.2 7 11.2 C9.8 11.2 11.2 8.6 11.2 6 C11.2 3 9 0.6 6 0.6 Z" fill="#fff" stroke="#3b3b3b" stroke-width="0.9"/> <circle cx="3.6" cy="4" r="0.8" fill="#c0392b"/><circle cx="6" cy="2.8" r="0.8" fill="#e6a017"/><circle cx="8.4" cy="4" r="0.8" fill="#2a7fd0"/><circle cx="9" cy="6.6" r="0.8" fill="#3a9a3a"/><circle cx="7.8" cy="8.8" r="0.8" fill="#8a3aa0"/></g></svg>
<span class="t" style="left:259.37px;top:281.15px;font-size:9.05px;color:#333;transform:scaleX(0.9608) rotate(0.05deg);">More Fill Colors...</span>
<div class="a" style="left:260.2px;top:289.7px;width:5.6px;height:0.6px;background:#333;"></div>
<svg class="a" style="left:241px;top:301px;" width="13" height="11"><g transform="translate(0.5 0.25)"><rect x="0.5" y="0.5" width="10.6" height="9" fill="#fff" stroke="#3b3b3b" stroke-width="0.9"/><path d="M0.8 7 L3.6 3.8 L6 6.2 L7.6 4.8 L10.8 8 V9.2 H0.8 Z" fill="#4aa0e6" stroke="#1e6fc0" stroke-width="0.6"/><circle cx="8.6" cy="2.8" r="0.8" fill="#3b3b3b"/></g></svg>
<span class="t" style="left:259.76px;top:303.35px;font-size:9.05px;color:#333;transform:scaleX(0.8954) rotate(0.05deg);">Picture...</span>
<div class="a" style="left:260.2px;top:311.1px;width:3.8px;height:0.6px;background:#333;"></div>
<div class="a" style="left:241.25px;top:322.5px;width:11.8px;height:11.3px;box-sizing:border-box;border:1px solid #3b3b3b;background:linear-gradient(135deg,#f2f2f2 0%,#bdbdbd 50%,#6e6e6e 100%)"></div>
<span class="t" style="left:260.18px;top:323.95px;font-size:9.05px;color:#333;transform:scaleX(0.9541) rotate(0.05deg);">Gradient</span>
<div class="a" style="left:260.2px;top:332.4px;width:4.8px;height:0.6px;background:#333;"></div>
<svg class="a" style="left:350px;top:323px;" width="6" height="9"><g transform="translate(0.75 0.75)"><path d="M0.4 0.4 L3.8 3.8 L0.4 7.2" fill="none" stroke="#2b2b2b" stroke-width="1.1"/></g></svg>
<svg class="a" style="left:241px;top:343px;" width="13" height="13"><g transform="translate(0.25 0.75)"><rect x="0.5" y="0.5" width="10.8" height="10.8" fill="#eaf4fc" stroke="#3b3b3b" stroke-width="0.9"/><path d="M1.2 10.6 L10.6 1.2" stroke="#fff" stroke-width="1.6"/><g fill="#3a8ad8"><rect x="5" y="8" width="1.2" height="1.2"/><rect x="7" y="6" width="1.2" height="1.2"/><rect x="7" y="8" width="1.2" height="1.2"/><rect x="9" y="4" width="1.2" height="1.2"/><rect x="9" y="6" width="1.2" height="1.2"/><rect x="9" y="8" width="1.2" height="1.2"/><rect x="2" y="2" width="1" height="1"/><rect x="2" y="4.4" width="1" height="1"/><rect x="4.2" y="2" width="1" height="1"/></g></g></svg>
<span class="t" style="left:259.93px;top:346.55px;font-size:9.05px;color:#333;transform:scaleX(0.9618) rotate(0.05deg);">Texture</span>
<div class="a" style="left:260.2px;top:354.6px;width:4.2px;height:0.6px;background:#333;"></div>
<svg class="a" style="left:350px;top:346px;" width="6" height="8"><g transform="translate(0.75 0.25)"><path d="M0.4 0.4 L3.8 3.8 L0.4 7.2" fill="none" stroke="#2b2b2b" stroke-width="1.1"/></g></svg>
<svg class="a" style="left:519px;top:38px;" width="80" height="29"><g transform="translate(0.8 0.4)"><rect x="1.400" y="1.400" width="76.200" height="25.000" rx="0" fill="none" stroke="#c8202c" stroke-width="2.8"/></g></svg>
<svg class="a" style="left:227px;top:59px;" width="78" height="35"><g transform="translate(0.1 0.3)"><rect x="1.500" y="1.500" width="74.700" height="30.900" rx="0" fill="none" stroke="#c8202c" stroke-width="3.0"/></g></svg>
<svg class="a" style="left:81px;top:250px;" width="137" height="140"><g transform="translate(0.2 0)"><rect x="1.350" y="1.350" width="133.700" height="136.700" rx="0" fill="none" stroke="#c8202c" stroke-width="2.7"/></g></svg>
<svg class="a" style="left:311px;top:169px;" width="10" height="3"><g transform="translate(0.4 0.9)"><rect x="0" y="0" width="9.400" height="1.300" rx="0" fill="#d6cf5a"/></g></svg>
<svg class="a" style="left:306px;top:165px;" width="19" height="17"><g transform="translate(0 0.3)"><rect x="1.350" y="1.350" width="16.100" height="13.800" rx="0" fill="none" stroke="#c8202c" stroke-width="2.7"/></g></svg>
<svg class="a" style="left:0px;top:468px;" width="720" height="8"><path d="M-1.4 0 V2.2 a5 5 0 0 0 5 5 H717.4 a5 5 0 0 0 5 -5 V0" fill="none" stroke="#c2e6d3" stroke-width="2.4"/><path d="M-1.4 0 V2.8 a5 5 0 0 0 5 5 H717.4 a5 5 0 0 0 5 -5 V0" fill="none" stroke="#2f6f4d" stroke-width="1.2"/></svg>
</div></body></html>
